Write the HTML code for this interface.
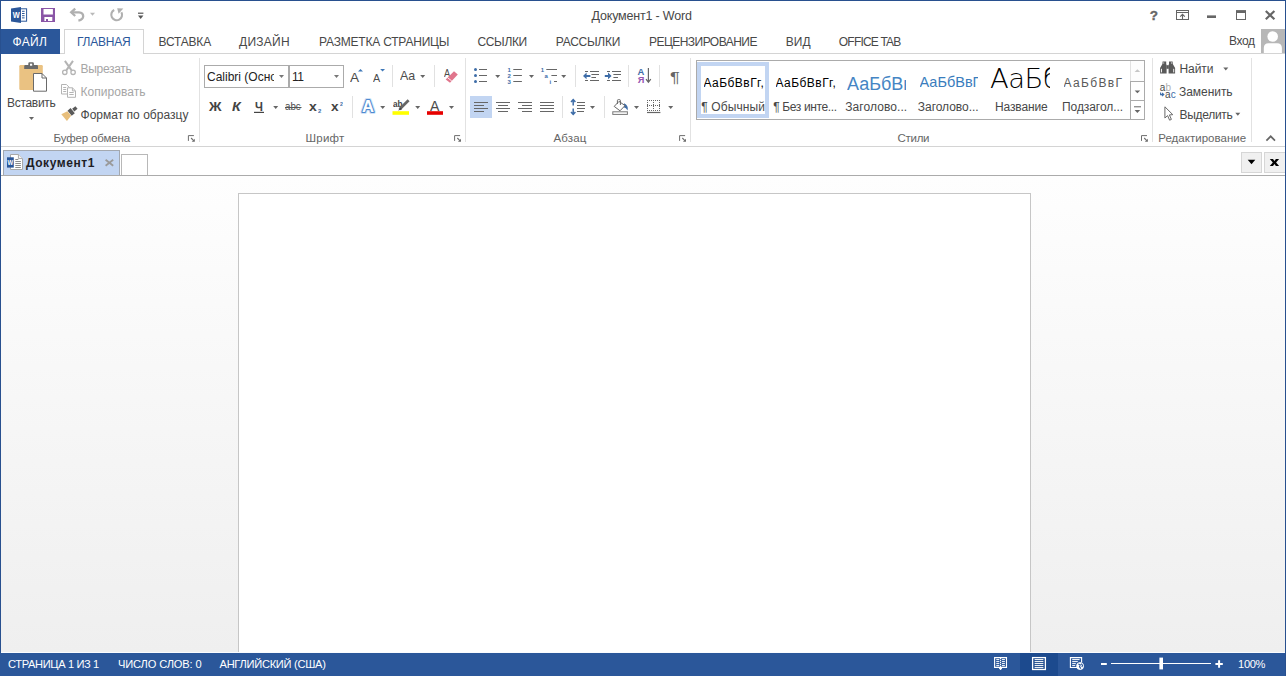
<!DOCTYPE html>
<html lang="ru">
<head>
<meta charset="utf-8">
<title>Документ1 - Word</title>
<style>
html,body{margin:0;padding:0;}
body{width:1286px;height:676px;overflow:hidden;background:#fff;font-family:"Liberation Sans","DejaVu Sans",sans-serif;}
#app{position:relative;width:1286px;height:676px;overflow:hidden;background:#fff;}
#app div,#app span.t,#app svg{position:absolute;}
.t{white-space:nowrap;display:block;}
.b{background:#2b579a;}
.wb{background:#28508f;}
.sep{width:1px;background:#e1e1e1;}
.gsep{width:1px;background:#e2e2e2;top:58px;height:84px;}
.clip{overflow:hidden;white-space:nowrap;}
.clip span{position:absolute;left:0;white-space:nowrap;}
</style>
</head>
<body>
<div id="app">
<!-- window frame -->
<div class="wb" style="left:0;top:0;width:1286px;height:1px;"></div>
<div class="wb" style="left:0;top:0;width:1px;height:676px;"></div>

<!-- tab row -->
<div style="left:1px;top:53px;width:1284px;height:1px;background:#d4d4d4;"></div>
<div class="b" style="left:1px;top:29px;width:59px;height:25px;"></div>
<div style="left:64px;top:29px;width:78px;height:24px;border:1px solid #d4d4d4;border-bottom:none;background:#fff;"></div>
<!-- avatar -->
<div style="left:1261px;top:29px;width:24px;height:24px;background:#b7b7b7;overflow:hidden;">
<svg width="24" height="24" viewBox="0 0 24 24" style="left:0;top:0;"><circle cx="11.7" cy="7.5" r="5.3" fill="#fff"/><path d="M2.8 24 V19 Q2.8 14.2 7.6 14.2 H16 Q20.9 14.2 20.9 19 V24 Z" fill="#fff"/></svg>
</div>

<!-- ribbon bottom border -->
<div style="left:1px;top:146px;width:1284px;height:1px;background:#d4d4d4;"></div>
<!-- group separators -->
<div class="gsep" style="left:199px;"></div>
<div class="gsep" style="left:465px;"></div>
<div class="gsep" style="left:690px;"></div>
<div class="gsep" style="left:1152px;"></div>
<div class="gsep" style="left:1251px;"></div>
<!-- small separators row1 -->
<div class="sep" style="left:392px;top:65px;height:22px;"></div>
<div class="sep" style="left:434px;top:65px;height:22px;"></div>
<div class="sep" style="left:575px;top:65px;height:22px;"></div>
<div class="sep" style="left:628px;top:65px;height:22px;"></div>
<div class="sep" style="left:659px;top:65px;height:22px;"></div>
<!-- row2 -->
<div class="sep" style="left:352px;top:96px;height:22px;"></div>
<div class="sep" style="left:562px;top:96px;height:22px;"></div>
<div class="sep" style="left:604px;top:96px;height:22px;"></div>

<!-- font name / size boxes -->
<div style="left:204px;top:65px;width:85px;height:23px;box-sizing:border-box;border:1px solid #ababab;background:#fff;"></div>
<div style="left:289px;top:65px;width:55px;height:23px;box-sizing:border-box;border:1px solid #ababab;background:#fff;"></div>
<div class="clip" style="left:207px;top:68.5px;width:66.5px;height:16px;font-size:12px;line-height:16px;color:#222;"><span id="fname">Calibri (Основной текст)</span></div>

<!-- align-left selected -->
<div style="left:470px;top:96px;width:22px;height:22px;background:#c2d5f2;"></div>

<!-- styles gallery -->
<div style="left:696px;top:60px;width:448px;height:59px;border:1px solid #ababab;background:#fff;box-sizing:border-box;width:449px;height:60px;"></div>
<div style="left:697px;top:62px;width:72px;height:56px;box-sizing:border-box;border:4px solid #c2d5f2;"></div>
<!-- gallery scroll -->
<div style="left:1130px;top:61px;width:14px;height:20px;box-sizing:border-box;border-left:1px solid #e1e1e1;background:#fdfdfd;"></div>
<div style="left:1130px;top:81px;width:15px;height:20px;box-sizing:border-box;border:1px solid #ababab;"></div>
<div style="left:1130px;top:100px;width:15px;height:20px;box-sizing:border-box;border:1px solid #ababab;"></div>

<!-- style previews -->
<div class="clip" style="left:703.5px;top:73px;width:62px;height:22px;font-size:12px;line-height:20px;color:#000;letter-spacing:0.45px;"><span id="p1">АаБбВвГг,</span></div>
<div class="clip" style="left:775.5px;top:73px;width:62px;height:22px;font-size:12px;line-height:20px;color:#000;letter-spacing:0.45px;"><span id="p2">АаБбВвГг,</span></div>
<div class="clip" style="left:847px;top:66px;width:59.3px;height:32px;font-size:18px;line-height:36px;color:#4585c4;"><span id="p3">АаБбВвГг</span></div>
<div class="clip" style="left:919.5px;top:66px;width:58px;height:32px;font-size:14.5px;line-height:32px;color:#3a7dbd;"><span id="p4">АаБбВвГг</span></div>
<div class="clip" style="left:990px;top:61px;width:60px;height:36px;font-size:27.4px;line-height:35px;color:#000;font-family:'DejaVu Sans Light','DejaVu Sans',sans-serif;font-weight:200;letter-spacing:-0.5px;"><span id="p5">АаБбВ</span></div>
<div class="clip" style="left:1063.5px;top:73px;width:59.5px;height:22px;font-size:12px;line-height:20px;color:#5a5a5a;letter-spacing:1.36px;"><span id="p6">АаБбВвГг</span></div>

<!-- office tab bar -->
<div style="left:3px;top:150px;width:117px;height:26px;box-sizing:border-box;border:1px solid #a3a8b0;border-bottom:none;background:#c2d5f2;"></div>
<div style="left:121px;top:154px;width:27px;height:22px;box-sizing:border-box;border:1px solid #b8b8b8;border-bottom:none;background:#fff;"></div>
<div style="left:1241px;top:152px;width:21px;height:21px;box-sizing:border-box;border:1px solid #d6d6d6;background:#f0f0f0;"></div>
<div style="left:1264px;top:152px;width:22px;height:21px;box-sizing:border-box;border:1px solid #d6d6d6;background:#f0f0f0;"></div>

<div style="left:1px;top:175px;width:1284px;height:1px;background:#ababab;"></div>
<!-- document area -->
<div style="left:1px;top:176px;width:1284px;height:476px;background:linear-gradient(#fefefe,#efefef);"></div>
<div style="left:1px;top:652px;width:1284px;height:1px;background:#fafcff;"></div>
<div style="left:238px;top:193px;width:793px;height:459px;box-sizing:border-box;border:1px solid #c6c6c6;border-bottom:none;background:#fff;"></div>

<!-- status bar -->
<div class="b" style="left:0;top:653px;width:1286px;height:23px;"></div>
<div style="left:1020px;top:653px;width:38px;height:23px;background:#1c4a8e;"></div>

<div class="wb" style="left:1285px;top:0;width:1px;height:676px;"></div>
<span class="t" id="m_title" style="left:591.5px;top:7.7px;font-size:12.5px;line-height:16px;letter-spacing:-0.18px;color:#484848;">Документ1 - Word</span>
<span class="t" id="m_tab0" style="left:12.5px;top:33.6px;font-size:12px;line-height:16px;letter-spacing:0.33px;color:#fff;">ФАЙЛ</span>
<span class="t" id="m_tab1" style="left:77.0px;top:33.6px;font-size:12px;line-height:16px;letter-spacing:-0.22px;color:#2b579a;">ГЛАВНАЯ</span>
<span class="t" id="m_tab2" style="left:158.5px;top:33.6px;font-size:12px;line-height:16px;letter-spacing:-0.19px;color:#484848;">ВСТАВКА</span>
<span class="t" id="m_tab3" style="left:239.0px;top:33.6px;font-size:12px;line-height:16px;letter-spacing:0.28px;color:#484848;">ДИЗАЙН</span>
<span class="t" id="m_tab4" style="left:319.0px;top:33.6px;font-size:12px;line-height:16px;letter-spacing:-0.20px;color:#484848;">РАЗМЕТКА СТРАНИЦЫ</span>
<span class="t" id="m_tab5" style="left:477.5px;top:33.6px;font-size:12px;line-height:16px;letter-spacing:-0.36px;color:#484848;">ССЫЛКИ</span>
<span class="t" id="m_tab6" style="left:555.8px;top:33.6px;font-size:12px;line-height:16px;letter-spacing:-0.27px;color:#484848;">РАССЫЛКИ</span>
<span class="t" id="m_tab7" style="left:649.0px;top:33.6px;font-size:12px;line-height:16px;letter-spacing:-0.54px;color:#484848;">РЕЦЕНЗИРОВАНИЕ</span>
<span class="t" id="m_tab8" style="left:785.8px;top:33.6px;font-size:12px;line-height:16px;letter-spacing:-0.02px;color:#484848;">ВИД</span>
<span class="t" id="m_tab9" style="left:838.8px;top:33.6px;font-size:12px;line-height:16px;letter-spacing:-0.79px;color:#484848;">OFFICE TAB</span>
<span class="t" id="m_signin" style="left:1229.0px;top:33.0px;font-size:12px;line-height:16px;letter-spacing:-0.41px;color:#484848;">Вход</span>
<span class="t" id="m_paste" style="left:7.0px;top:94.7px;font-size:12px;line-height:16px;letter-spacing:-0.30px;color:#484848;">Вставить</span>
<span class="t" id="m_cut" style="left:80.5px;top:60.7px;font-size:12px;line-height:16px;letter-spacing:-0.30px;color:#a6a6a6;">Вырезать</span>
<span class="t" id="m_copy" style="left:80.5px;top:84.0px;font-size:12px;line-height:16px;letter-spacing:0.04px;color:#a6a6a6;">Копировать</span>
<span class="t" id="m_fmt" style="left:80.5px;top:106.7px;font-size:12px;line-height:16px;letter-spacing:0.02px;color:#484848;">Формат по образцу</span>
<span class="t" id="m_g1" style="left:53.5px;top:130.4px;font-size:11.5px;line-height:16px;letter-spacing:-0.14px;color:#666;">Буфер обмена</span>
<span class="t" id="m_g2" style="left:305.5px;top:130.4px;font-size:11.5px;line-height:16px;letter-spacing:0.23px;color:#666;">Шрифт</span>
<span class="t" id="m_g3" style="left:553.5px;top:130.4px;font-size:11.5px;line-height:16px;letter-spacing:0.15px;color:#666;">Абзац</span>
<span class="t" id="m_g4" style="left:897.5px;top:130.4px;font-size:11.5px;line-height:16px;letter-spacing:-0.29px;color:#666;">Стили</span>
<span class="t" id="m_g5" style="left:1158.2px;top:130.4px;font-size:11.5px;line-height:16px;letter-spacing:0.03px;color:#666;">Редактирование</span>
<span class="t" id="m_fsize" style="left:292.0px;top:68.5px;font-size:12px;line-height:16px;letter-spacing:-0.48px;color:#222;">11</span>
<span class="t" id="m_find" style="left:1179.5px;top:60.7px;font-size:12px;line-height:16px;letter-spacing:-0.09px;color:#484848;">Найти</span>
<span class="t" id="m_repl" style="left:1179.0px;top:84.0px;font-size:12px;line-height:16px;letter-spacing:-0.05px;color:#484848;">Заменить</span>
<span class="t" id="m_sel" style="left:1179.5px;top:106.7px;font-size:12px;line-height:16px;letter-spacing:-0.29px;color:#484848;">Выделить</span>
<span class="t" id="m_s1" style="left:701.2px;top:99.0px;font-size:12px;line-height:16px;letter-spacing:0.13px;color:#484848;">¶ Обычный</span>
<span class="t" id="m_s2" style="left:773.2px;top:99.0px;font-size:12px;line-height:16px;letter-spacing:-0.36px;color:#484848;">¶ Без инте...</span>
<span class="t" id="m_s3" style="left:845.3px;top:99.0px;font-size:12px;line-height:16px;letter-spacing:0.07px;color:#484848;">Заголово...</span>
<span class="t" id="m_s4" style="left:917.8px;top:99.0px;font-size:12px;line-height:16px;letter-spacing:-0.04px;color:#484848;">Заголово...</span>
<span class="t" id="m_s5" style="left:995.0px;top:99.0px;font-size:12px;line-height:16px;letter-spacing:-0.14px;color:#484848;">Название</span>
<span class="t" id="m_s6" style="left:1062.0px;top:99.0px;font-size:12px;line-height:16px;letter-spacing:-0.07px;color:#484848;">Подзагол...</span>
<span class="t" id="m_otab" style="left:25.9px;top:155.0px;font-size:12px;line-height:16px;letter-spacing:0.58px;color:#1e1e26;font-weight:bold;">Документ1</span>
<span class="t" id="m_sb1" style="left:8.0px;top:656.0px;font-size:11.1px;line-height:16px;letter-spacing:-0.36px;color:#fff;">СТРАНИЦА 1 ИЗ 1</span>
<span class="t" id="m_sb2" style="left:118.0px;top:656.0px;font-size:11.1px;line-height:16px;letter-spacing:-0.14px;color:#fff;">ЧИСЛО СЛОВ: 0</span>
<span class="t" id="m_sb3" style="left:219.5px;top:656.0px;font-size:11.1px;line-height:16px;letter-spacing:-0.27px;color:#fff;">АНГЛИЙСКИЙ (США)</span>
<span class="t" id="m_sb4" style="left:1238.1px;top:656.0px;font-size:11.1px;line-height:16px;letter-spacing:-0.37px;color:#fff;">100%</span>
<span class="t" id="m_gA1" style="left:350.3px;top:69.9px;font-size:13.6px;line-height:16px;transform-origin:0 50%;transform:scaleX(1.002);color:#4c4c4c;">A</span>
<span class="t" id="m_gA2" style="left:373.4px;top:70.4px;font-size:11.2px;line-height:16px;transform-origin:0 50%;transform:scaleX(0.964);color:#4c4c4c;">A</span>
<span class="t" id="m_gAa" style="left:400.2px;top:67.5px;font-size:12.6px;line-height:16px;transform-origin:0 50%;transform:scaleX(0.987);color:#4c4c4c;">Aa</span>
<span class="t" id="m_gAc" style="left:443.8px;top:65.1px;font-size:11.3px;line-height:16px;transform-origin:0 50%;transform:scaleX(0.822);color:#4c4c4c;">A</span>
<span class="t" id="m_gB" style="left:208.6px;top:98.5px;font-size:12.5px;line-height:16px;transform-origin:0 50%;transform:scaleX(1.105);color:#444;font-weight:bold;">Ж</span>
<span class="t" id="m_gI" style="left:231.9px;top:98.5px;font-size:12.5px;line-height:16px;transform-origin:0 50%;transform:scaleX(1.132);color:#444;font-weight:bold;font-style:italic;">К</span>
<span class="t" id="m_gU" style="left:254.8px;top:98.5px;font-size:12.5px;line-height:16px;transform-origin:0 50%;transform:scaleX(0.898);color:#444;font-weight:bold;">Ч</span>
<span class="t" id="m_gS" style="left:285.4px;top:98.1px;font-size:11.2px;line-height:16px;transform-origin:0 50%;transform:scaleX(0.870);color:#4c4c4c;">abc</span>
<span class="t" id="m_gx1" style="left:309.0px;top:98.5px;font-size:12.4px;line-height:16px;transform-origin:0 50%;transform:scaleX(1.129);color:#444;font-weight:bold;">x</span>
<span class="t" id="m_gx1b" style="left:317.7px;top:103.0px;font-size:5.4px;line-height:16px;transform-origin:0 50%;transform:scaleX(1.100);color:#3e6da8;font-weight:bold;">2</span>
<span class="t" id="m_gx2" style="left:331.2px;top:98.5px;font-size:12.4px;line-height:16px;transform-origin:0 50%;transform:scaleX(1.100);color:#444;font-weight:bold;">x</span>
<span class="t" id="m_gx2b" style="left:340.1px;top:95.7px;font-size:5.4px;line-height:16px;transform-origin:0 50%;transform:scaleX(0.967);color:#3e6da8;font-weight:bold;">2</span>
<span class="t" id="m_gab" style="left:393.0px;top:95.6px;font-size:9px;line-height:16px;transform-origin:0 50%;transform:scaleX(0.913);color:#444;font-weight:bold;">ab</span>
<span class="t" id="m_gFc" style="left:430.4px;top:97.6px;font-size:14px;line-height:16px;transform-origin:0 50%;transform:scaleX(1.006);color:#4c4c4c;">A</span>
<span class="t" id="m_gP" style="left:670.0px;top:68.6px;font-size:14px;line-height:16px;transform-origin:0 50%;transform:scaleX(1.301);color:#666;">¶</span>
<svg width="1286" height="676" viewBox="0 0 1286 676" style="left:0;top:0;pointer-events:none;" font-family="Liberation Sans, DejaVu Sans, sans-serif">


<!-- ===== QAT ===== -->
<g id="i-word">
<rect x="20" y="8.8" width="6.6" height="12.4" fill="#fff" stroke="#2b579a" stroke-width="1"/>
<path d="M22 11.3h2.6M22 13.5h2.6M22 15.7h2.6M22 17.9h2.6" stroke="#2b579a" stroke-width="1"/>
<path d="M11 8.6 L21 7 V23 L11 21.4 Z" fill="#2b579a"/>
<text x="16.2" y="18.4" font-size="9" font-weight="bold" fill="#fff" text-anchor="middle" textLength="7" lengthAdjust="spacingAndGlyphs">W</text>
</g>
<g id="i-save">
<rect x="41" y="8" width="14" height="14" fill="#8a55a6"/>
<rect x="43.5" y="9" width="9.4" height="5.5" fill="#fff"/>
<rect x="44.4" y="17" width="7.9" height="4" fill="#fff"/>
<rect x="46" y="19" width="2" height="2" fill="#8a55a6"/>
</g>
<g id="i-undo" fill="none" stroke="#b0b0b0" stroke-width="2.3">
<path d="M75.2 8.6 L71.2 12.3 L75.2 16"/>
<path d="M71.5 12.3 H79 Q83.2 12.6 83.2 16.2 Q83 19.6 78.4 20.6"/>
</g>
<path transform="translate(90 12.7)" d="M0 0 H5 L2.5 3 Z" fill="#b9b9b9"/>
<g id="i-redo">
<path d="M114.2 10 A5.4 5.4 0 1 0 121.4 12.2" fill="none" stroke="#b0b0b0" stroke-width="2.1"/>
<path d="M117.2 8.2 L123.3 8.5 L118.6 13.8 Z" fill="#b0b0b0"/>
</g>
<g id="i-qat" fill="#555"><rect x="138" y="12.6" width="5.4" height="1.2"/><path d="M138 15.6 H143.4 L140.7 19 Z"/></g>

<!-- ===== window controls ===== -->
<text x="1149.8" y="19.9" font-size="13.5" font-weight="bold" fill="#666" stroke="#666" stroke-width="0.35">?</text>
<g id="i-rdo" fill="none" stroke="#666" stroke-width="1">
<rect x="1176.5" y="10.5" width="12" height="9"/><path d="M1176.5 12.5 H1188.5"/>
<path d="M1182.5 19 V14.6 M1180.2 16.6 L1182.5 14.3 L1184.8 16.6" stroke-width="1.1"/>
</g>
<rect x="1207" y="15.4" width="9" height="2.6" fill="#666"/>
<g id="i-max"><rect x="1236.5" y="11" width="9" height="8.5" fill="none" stroke="#666" stroke-width="1"/><rect x="1236" y="10.2" width="10" height="2.8" fill="#666"/></g>
<path d="M1265.8 11 L1274.4 19.2 M1274.4 11 L1265.8 19.2" stroke="#666" stroke-width="2.2" fill="none"/>

<!-- ===== Clipboard ===== -->
<g id="i-paste">
<rect x="19.3" y="65" width="23.5" height="25" rx="1.2" fill="#eac282"/>
<path d="M24.2 69 V66.2 Q24.2 65 25.4 65 H28.3 V63.4 Q28.3 62.2 29.5 62.2 H32.7 Q33.9 62.2 33.9 63.4 V65 H36.8 Q38 65 38 66.2 V69 Z" fill="#6a6a6a"/>
<rect x="30" y="63.7" width="2.2" height="2" fill="#fff"/>
<path d="M33.5 73.5 H42 L46.5 78 V91.2 H33.5 Z" fill="#fff" stroke="#6a6a6a" stroke-width="1"/>
<path d="M42 73.5 V78 H46.5" fill="none" stroke="#6a6a6a" stroke-width="1"/>
</g>
<path transform="translate(29 117)" d="M0 0 H5 L2.5 3 Z" fill="#666"/>
<g id="i-cut" fill="none" stroke="#b4b4b4">
<path d="M64.9 60.9 L71.6 70.4 M73 60.9 L66.3 70.4" stroke-width="2"/>
<circle cx="64.8" cy="72.3" r="2.2" stroke-width="1.3"/><circle cx="73.1" cy="72.3" r="2.2" stroke-width="1.3"/>
</g>
<g id="i-copy" fill="#fff" stroke="#b4b4b4" stroke-width="1">
<path d="M61.5 84.5 H66.4 L69.5 87.6 V94 H61.5 Z"/>
<path d="M63.2 87.5h3M63.2 89.5h3M63.2 91.5h3" stroke-width="1"/>
<path d="M67.5 87.8 H72.4 L75.5 90.9 V97.3 H67.5 Z"/>
<path d="M72.4 87.8 V90.9 H75.5" fill="none"/>
<path d="M69.3 92.5h4.4M69.3 94.5h4.4" stroke-width="1"/>
</g>
<g id="i-fmt" transform="translate(70.3 112.6) rotate(-39.5)">
<path d="M-1.4 -3 L-8 -4.4 V4.4 L-1.4 3 Z" fill="#e8bf7c"/>
<rect x="-0.9" y="-3.3" width="4" height="6.6" fill="#5a5a5a"/>
<rect x="3.8" y="-1.7" width="4.2" height="3.4" fill="#5a5a5a"/>
</g>
<g transform="translate(187.9 135.1)"><path d="M0.5 5.8 V0.5 H6" fill="none" stroke="#6e6e6e" stroke-width="1"/><path d="M3.2 2.9 L6 5.8" fill="none" stroke="#6e6e6e" stroke-width="1.1"/><path d="M6.9 3.6 V6.7 H3.8 Z" fill="#6e6e6e"/></g>

<!-- ===== Font ===== -->
<path transform="translate(279 75)" d="M0 0 H5 L2.5 3 Z" fill="#777"/>
<path transform="translate(334 75)" d="M0 0 H5 L2.5 3 Z" fill="#777"/>
<path d="M358 71.6 L360.5 69 L363 71.6 Z" fill="#3f78b8"/>
<path d="M380.2 69 H385 L382.6 71.6 Z" fill="#3f78b8"/>
<path transform="translate(420.2 75)" d="M0 0 H5 L2.5 3 Z" fill="#666"/>
<g id="i-clear">
<path d="M454 71.2 L457.8 74.5 L450 82.7 L445.7 79.4 Z" fill="#e0758c"/>
<path d="M447.4 77.6 L451.7 80.9" stroke="#fff" stroke-width="0.9"/>
</g>
<path transform="translate(273.2 106)" d="M0 0 H5 L2.5 3 Z" fill="#666"/>
<rect x="254" y="111.8" width="10" height="1.2" fill="#444"/>
<rect x="285" y="107" width="16.5" height="1" fill="#555"/>
<text x="367.9" y="112.2" font-size="16.6" font-weight="bold" text-anchor="middle" fill="#fff" stroke="#d3e3f6" stroke-width="4" stroke-linejoin="round">A</text>
<text x="367.9" y="112.2" font-size="16.6" font-weight="bold" text-anchor="middle" fill="#fff" stroke="#4f8ad0" stroke-width="2.2" stroke-linejoin="round" paint-order="stroke">A</text>
<path transform="translate(380.2 106)" d="M0 0 H5 L2.5 3 Z" fill="#666"/>
<g id="i-hl">
<rect x="392.5" y="111.2" width="16.5" height="3.6" fill="#ffff00"/>
<path d="M408.6 100.2 L399.6 109.2" stroke="#666" stroke-width="2.8" stroke-linecap="butt"/>
<path d="M400.8 107.4 L398 110.6 L401.8 109.6 Z" fill="#444"/>
</g>
<path transform="translate(415.2 106)" d="M0 0 H5 L2.5 3 Z" fill="#666"/>
<rect x="427" y="111.2" width="16" height="3.6" fill="#e60000"/>
<path transform="translate(449 106)" d="M0 0 H5 L2.5 3 Z" fill="#666"/>
<g transform="translate(454.1 135.1)"><path d="M0.5 5.8 V0.5 H6" fill="none" stroke="#6e6e6e" stroke-width="1"/><path d="M3.2 2.9 L6 5.8" fill="none" stroke="#6e6e6e" stroke-width="1.1"/><path d="M6.9 3.6 V6.7 H3.8 Z" fill="#6e6e6e"/></g>

<!-- ===== Paragraph row 1 ===== -->
<g id="i-bul"><g fill="#3e6da8"><circle cx="475.5" cy="69.5" r="1.5"/><circle cx="475.5" cy="75.5" r="1.5"/><circle cx="475.5" cy="81.5" r="1.5"/></g>
<path d="M479 69.5h8M479 75.5h8M479 81.5h8" stroke="#666" stroke-width="1"/></g>
<path transform="translate(495.2 75)" d="M0 0 H5 L2.5 3 Z" fill="#666"/>
<g id="i-num"><path d="M513.3 69.5h8.6M513.3 75.5h8.6M513.3 81.5h8.6" stroke="#666" stroke-width="1"/>
<g font-size="6" font-weight="bold" fill="#3e6da8"><text x="507.6" y="71.7">1</text><text x="507.6" y="77.7">2</text><text x="507.6" y="83.7">3</text></g></g>
<path transform="translate(529 75)" d="M0 0 H5 L2.5 3 Z" fill="#666"/>
<g id="i-ml"><path d="M546.3 69.5H557M551.4 75.5H557M554 81.5H557" stroke="#666" stroke-width="1"/>
<g font-size="6" font-weight="bold" fill="#3e6da8"><text x="540.8" y="71.7">1</text><text x="544.6" y="77.6">a</text><text x="549.4" y="83.7">i</text></g></g>
<path transform="translate(561.2 75)" d="M0 0 H5 L2.5 3 Z" fill="#666"/>
<g id="i-dec"><path d="M585 71.5h3M590 71.5h9M591.4 74.5h7.6M591.4 77.5h4.6M585 80.5h3M590 80.5h9" stroke="#666" stroke-width="1"/>
<path d="M583 75.9 L586.6 72.6 V74.9 H590.4 V76.9 H586.6 V79.2 Z" fill="#3e6da8"/></g>
<g id="i-inc"><path d="M607 71.5h3M612 71.5h9M613.4 74.5h7.6M613.4 77.5h4.6M607 80.5h3M612 80.5h9" stroke="#666" stroke-width="1"/>
<path d="M611.6 75.9 L608 72.6 V74.9 H604.8 V76.9 H608 V79.2 Z" fill="#3e6da8"/></g>
<g id="i-sort"><text x="637.6" y="74.6" font-size="9" font-weight="bold" fill="#3e6da8" textLength="6.8" lengthAdjust="spacingAndGlyphs">А</text><text x="637.8" y="82.8" font-size="9" font-weight="bold" fill="#9552b0" textLength="6.6" lengthAdjust="spacingAndGlyphs">Я</text>
<path d="M648.4 68 V82 M646 79.2 L648.4 82.2 L650.8 79.2" fill="none" stroke="#666" stroke-width="1.2"/></g>

<!-- ===== Paragraph row 2 ===== -->
<g stroke="#666" stroke-width="1">
<path d="M474 102.5h14M474 105.5h10M474 108.5h14M474 111.5h10"/>
<path d="M496 102.5h14M498 105.5h10M496 108.5h14M498 111.5h10"/>
<path d="M518 102.5h14M522 105.5h10M518 108.5h14M522 111.5h10"/>
<path d="M540 102.5h14M540 105.5h14M540 108.5h14M540 111.5h14"/>
<path d="M577 102.5h8M577 105.5h8M577 108.5h8M577 111.5h7"/>
</g>
<path d="M573.2 99.8 V105.6 M571 102 L573.2 99.6 L575.4 102 M573.2 108.4 V114.2 M571 112 L573.2 114.4 L575.4 112" fill="none" stroke="#3e6da8" stroke-width="1.5"/>
<path transform="translate(590 106)" d="M0 0 H5 L2.5 3 Z" fill="#666"/>
<g id="i-shade">
<rect x="612.8" y="111.8" width="14.6" height="2.6" fill="#fff" stroke="#777" stroke-width="1"/>
<path d="M624 103.2 Q628.8 105.4 627.6 110.4 Q626.2 107.6 623.6 107.2 Z" fill="#3e6da8"/>
<path d="M614.2 106.4 L619 101.4 L625 105.6 L620 110.8 Z" fill="#fff" stroke="#666" stroke-width="1"/>
<path d="M617.4 104 V100.6 Q617.4 99.6 618.4 99.6 H619.4 Q620.4 99.6 620.4 100.6 V105" fill="none" stroke="#666" stroke-width="1"/>
</g>
<path transform="translate(634 106)" d="M0 0 H5 L2.5 3 Z" fill="#666"/>
<g id="i-bord" stroke="#666" stroke-width="1" fill="none">
<path d="M647 100.5h13M647 105.5h13M647 110.5h13" stroke-dasharray="1 1"/>
<path d="M647.5 100v11M653.5 100v11M659.5 100v11" stroke-dasharray="1 1"/>
<path d="M647 112.5h13.4" stroke-width="1.2"/>
</g>
<path transform="translate(668.2 106)" d="M0 0 H5 L2.5 3 Z" fill="#666"/>
<g transform="translate(679.1 135.1)"><path d="M0.5 5.8 V0.5 H6" fill="none" stroke="#6e6e6e" stroke-width="1"/><path d="M3.2 2.9 L6 5.8" fill="none" stroke="#6e6e6e" stroke-width="1.1"/><path d="M6.9 3.6 V6.7 H3.8 Z" fill="#6e6e6e"/></g>

<!-- ===== Styles gallery scroll ===== -->
<path d="M1134.6 72 L1137.4 69.2 L1140.2 72 Z" fill="#c6c6c6"/>
<path d="M1134.6 90.4 H1140.2 L1137.4 93.3 Z" fill="#666"/>
<path d="M1134 106.8h7" stroke="#666" stroke-width="1"/><path d="M1134.6 110 H1140.2 L1137.4 113 Z" fill="#666"/>
<g transform="translate(1141 135.1)"><path d="M0.5 5.8 V0.5 H6" fill="none" stroke="#6e6e6e" stroke-width="1"/><path d="M3.2 2.9 L6 5.8" fill="none" stroke="#6e6e6e" stroke-width="1.1"/><path d="M6.9 3.6 V6.7 H3.8 Z" fill="#6e6e6e"/></g>

<!-- ===== Editing ===== -->
<g id="i-find" fill="#5a5a5a">
<path d="M1162.6 61.4 H1166.2 V64 L1166.6 65 V73.6 H1160.1 V68 L1162.4 64 Z"/>
<path d="M1169 61.4 H1172.6 L1172.8 64 L1175.1 68 V73.6 H1168.6 V65 L1169 64 Z"/>
<rect x="1166.4" y="65.2" width="2.4" height="3.6"/>
<path d="M1161.5 68.8 V72.4 M1173.7 68.8 V72.4 M1163.7 62.5 V63.5 M1171.5 62.5 V63.5" stroke="#fff" stroke-width="0.9" fill="none"/>
</g>
<path transform="translate(1223.3 67.4)" d="M0 0 H5 L2.5 3 Z" fill="#666"/>
<g id="i-repl" font-size="10">
<text x="1159.7" y="90.5" fill="#4a4a4a">a</text><text x="1165.4" y="90.5" fill="#b0b0b0">b</text>
<text x="1165" y="97.6" fill="#4a4a4a">a</text><text x="1170.7" y="97.6" fill="#3e6da8">c</text>
<path d="M1160.6 92.4 V94.6 H1163.6 M1162 93 L1163.8 94.6 L1162 96.2" fill="none" stroke="#3e6da8" stroke-width="1.1"/>
</g>
<path d="M1164.9 106.8 V118 L1167.6 115.6 L1169.6 120.2 L1171.4 119.4 L1169.4 114.9 L1172.8 114.7 Z" fill="#fff" stroke="#6a6a6a" stroke-width="1" stroke-linejoin="miter"/>
<path transform="translate(1235.3 112.8)" d="M0 0 H5 L2.5 3 Z" fill="#666"/>
<path d="M1266.4 140.6 L1270.7 136.3 L1275 140.6" fill="none" stroke="#666" stroke-width="1.7"/>

<!-- ===== Office Tab bar ===== -->
<g id="i-doc">
<path d="M10.5 154.5 H18.4 L22.5 158.6 V169.5 H10.5 Z" fill="#fff" stroke="#a8a8a8" stroke-width="1"/>
<path d="M18.4 154.5 V158.6 H22.5" fill="#f4f4f4" stroke="#a8a8a8" stroke-width="1"/>
<path d="M15.3 159.5h3M15.3 161.5h5.6M15.3 163.5h5.6M15.3 165.5h5.6M15.3 167.5h5.6" stroke="#8c8c8c" stroke-width="1"/>
<rect x="7" y="157.3" width="6.8" height="10.3" fill="#2b579a"/>
<text x="10.4" y="165.4" font-size="7.4" font-weight="bold" fill="#fff" text-anchor="middle" textLength="5.6" lengthAdjust="spacingAndGlyphs">W</text>
</g>
<path d="M105.6 159.8 L113.2 165.8 M113.2 159.8 L105.6 165.8" stroke="#9a9a9a" stroke-width="1.8" fill="none"/>
<path d="M1247.7 159.8 H1255.3 L1251.5 164.2 Z" fill="#000"/>
<path d="M1269.8 159 H1273 L1274.45 161 L1275.9 159 H1279.1 L1276.1 162.45 L1279.1 165.9 H1275.9 L1274.45 163.9 L1273 165.9 H1269.8 L1272.8 162.45 Z" fill="#000"/>

<!-- ===== Status bar ===== -->
<g id="i-read" fill="none" stroke="#fff" stroke-width="1.1">
<path d="M994.6 657.6 H1006.5 V667.4 H994.6 Z"/>
<path d="M1000.55 657.6 V670" stroke-dasharray="1.4 0.7"/>
<path d="M996.3 659.6h3M996.3 661.6h3M996.3 663.6h3M996.3 665.6h3M1001.9 659.6h3M1001.9 661.6h3M1001.9 663.6h3M1001.9 665.6h3" stroke-width="1"/>
<path d="M999.2 668 L1000.55 669.8 L1001.9 668" stroke-width="1"/>
</g>
<g id="i-print" fill="none" stroke="#fff">
<rect x="1032.6" y="657.6" width="12.8" height="11.9" stroke-width="1.3"/>
<path d="M1034.6 659.6h8.8M1034.6 661.6h8.8M1034.6 663.6h8.8M1034.6 665.6h8.8M1034.6 667.6h8.8" stroke-width="1"/>
</g>
<g id="i-web" fill="none" stroke="#fff" stroke-width="1.1">
<path d="M1077 667.5 H1070.4 V657.6 H1081.6 V662.4"/>
<path d="M1072.2 659.6h7.4M1072.2 661.6h5.6M1072.2 663.6h3.6M1072.2 665.6h3" stroke-width="1"/>
<circle cx="1080.1" cy="666.1" r="3.5" fill="#fff" stroke="#fff" stroke-width="0.8"/>
<path d="M1078.3 664 L1080.3 664.8 L1079.5 666.6 L1080.8 668.6 M1081.3 663.6 L1082.6 665.6 L1081.8 667" stroke="#2b579a" stroke-width="1.1"/>
</g>
<rect x="1101" y="663" width="5.8" height="2" fill="#fff"/>
<rect x="1111" y="663" width="100" height="1" fill="#fff"/>
<rect x="1159.4" y="657.6" width="3.6" height="11.8" fill="#fff"/>
<path d="M1215.4 664 H1222.8 M1219.1 660.3 V667.7" stroke="#fff" stroke-width="2"/>
</svg>

</div>
</body>
</html>
